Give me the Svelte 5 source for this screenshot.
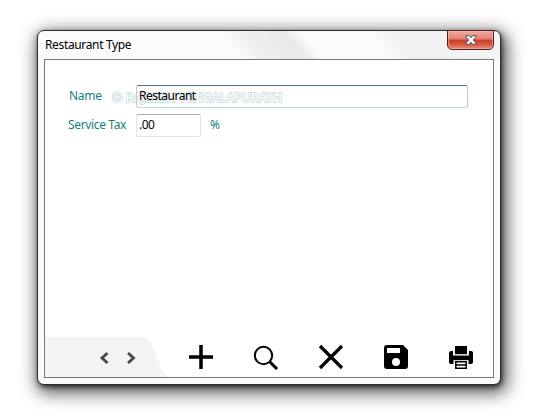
<script>
  let name = $state('Restaurant');
  let tax = $state('.00');
</script>

<main>
  <section class="window">
    <header>
      <span class="title">Restaurant Type</span>
      <button class="close" aria-label="Close">
        <svg width="12" height="10" viewBox="0 0 12 10"><path d="M1 .7H4.2L6 2.8 7.8.7H11V2L8.2 5 11 8V9.3H7.8L6 7.2 4.2 9.3H1V8L3.8 5 1 2Z" fill="#f7f7fa" stroke="#535666" /></svg>
      </button>
    </header>
    <div class="client">
      <form>
        <div class="row">
          <label for="name" class="l-name">Name</label>
          <svg class="mark" width="180" height="20"><text x="4" y="15" textLength="170" lengthAdjust="spacingAndGlyphs">© RAJEESH VENGALAPURATH</text></svg>
          <input id="name" class="wide" bind:value={name} />
        </div>
        <div class="row">
          <label for="tax" class="l-tax">Service Tax</label>
          <input id="tax" class="short" bind:value={tax} />
          <span class="pct">%</span>
        </div>
      </form>
      <footer>
        <div class="nav">
          <svg class="shape" width="124" height="40" viewBox="0 0 124 40"><path d="M0 0H97Q103 0 106 6L116 31Q119 39 124 40H0Z" fill="#f3f4f6" /><rect x="47" y="9" width="50" height="24" fill="#f4f4f4" /><path d="M62.500 16L57 21 62.500 26M83 16L88.500 21 83 26" fill="none" stroke="#484848" stroke-width="2.900" /></svg>
        </div>
        <div class="tools">
          <svg width="26" height="26" viewBox="0 0 26 26"><path d="M13 1V25M1 13H25" stroke="#000" stroke-width="3.500" /></svg>
          <svg width="26" height="26" viewBox="0 0 26 26"><circle cx="10.500" cy="11.500" r="8.700" fill="none" stroke="#000" stroke-width="2" /><path d="M16.500 17.500L24 25" stroke="#000" stroke-width="3" /></svg>
          <svg width="26" height="26" viewBox="0 0 26 26"><path d="M2 2L24 24M24 2L2 24" stroke="#000" stroke-width="3.200" /></svg>
          <svg width="26" height="26" viewBox="0 0 26 26"><path fill-rule="evenodd" d="M4 1H20L25 6V22Q25 25 22 25H4Q1 25 1 22V4Q1 1 4 1ZM4 4V9H17V4ZM13 14A4 4 0 1 0 13 22A4 4 0 1 0 13 14Z" /></svg>
          <svg width="26" height="26" viewBox="0 0 26 26"><path d="M7 2H19V10H7Z" /><path d="M3 7H5V11.500H21V7H23Q25 7 25 9V18Q25 20 23 20H20.500V16H5.500V20H3Q1 20 1 18V9Q1 7 3 7Z" /><path d="M6 10.700H20M6 16.600H20" stroke="#bbb" stroke-width=".800" /><path d="M7.800 17.800H18.200V24.200H7.800ZM8 21H18" fill="#fff" stroke="#000" stroke-width="1.500" /></svg>
        </div>
      </footer>
    </div>
  </section>
</main>

<style>
  :global(body) { background: #fff; overflow: hidden; }
  main { width: 534px; height: 419px; padding: 30px 33px 34px 37px; box-sizing: border-box; font: 12px "Noto Sans", "Open Sans", sans-serif; }
  .window {
    width: 464px; height: 355px; box-sizing: border-box; border: 1px solid #2d2b2d; border-radius: 7px;
    padding: 0 6px 6px;
    background: linear-gradient(51deg, #fbfbfb 158px, #f0f0f0 176px, #e8e8e8 208px, #fbfbfb 221px, #fbfbfb 274px, #f1f1f1 292px, #f4f4f4) 0 0 / 100% 28px no-repeat #fafafa;
    box-shadow: 1px 2px 5px #000000a0, 3px 5px 17px 3px #000000a8;
  }
  header { height: 28px; display: flex; justify-content: space-between; align-items: flex-start; }
  .title { padding-left: 1px; line-height: 28px; letter-spacing: -.35px; color: #000; }
  .close {
    width: 47px; height: 20px; margin: -1px 0 0; padding: 0; box-sizing: border-box; display: grid; place-items: center;
    border: 1px solid #52211e; border-radius: 0 0 5px 5px;
    background: linear-gradient(#f1aaa0, #df8073 45%, #c93c25 50%, #d65841 75%, #e99180);
    box-shadow: inset 0 0 0 1px #f5b9ad99;
  }
  .client { width: 450px; height: 319px; box-sizing: border-box; border: 1px solid #777; background: #fff; display: flex; flex-direction: column; justify-content: space-between; }
  form { padding-top: 25px; display: flex; flex-direction: column; gap: 6px; }
  .row { display: flex; align-items: center; height: 23px; position: relative; color: #16807f; }
  label { box-sizing: border-box; width: 91px; padding-bottom: 2px; white-space: nowrap; }
  .l-name { padding-left: 24px; letter-spacing: -.3px; }
  .l-tax { padding-left: 23px; letter-spacing: -.35px; }
  input { position: relative; box-sizing: border-box; height: 23px; margin: 0; border: 1px solid #e2e3ea; border-top-color: #abadb3; border-radius: 2px; padding: 0 2px 2px; background: transparent; color: #000; font: inherit; letter-spacing: -.5px; outline: none; }
  .wide { width: 332px; border-color: #3d7bad #a4c9e3 #b7d9ed #b5cfe7; }
  .short { width: 65px; }
  .pct { margin-left: 9px; padding-bottom: 2px; }
  .mark { position: absolute; left: 63px; top: 2px; pointer-events: none; }
  .mark text { font: 12px "Noto Sans", sans-serif; fill: #fff; stroke: #d0dee1; stroke-width: 1.8px; paint-order: stroke; }
  footer { height: 40px; display: flex; }
  .nav { width: 124px; }
  .shape, .tools svg { display: block; }
  .tools { display: flex; gap: 39px; padding: 7px 0 0 19px; }
</style>
